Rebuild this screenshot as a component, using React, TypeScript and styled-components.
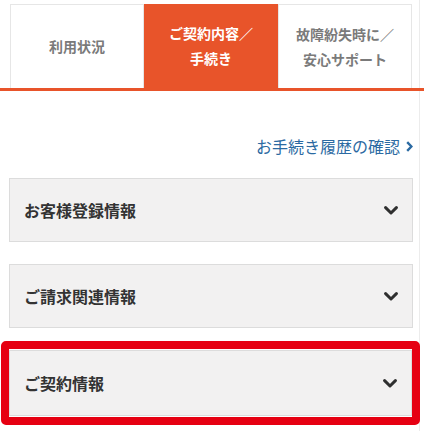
import React from 'react';
import styled, { createGlobalStyle } from 'styled-components';

const GlobalStyle = createGlobalStyle`
  html, body {
    margin: 0;
    padding: 0;
    background: #fff;
    font-family: "Noto Sans CJK JP", "Noto Sans", sans-serif;
    overflow: hidden;
  }
`;

const Page = styled.div`
  width: 419px;
  min-height: 431px;
  border-right: 1px solid #ececec;
`;

const TabBar = styled.nav`
  display: flex;
  padding: 4px 0 0 10px;
  margin-right: -5px;
  border-bottom: 3px solid #e8542a;
`;

const Tab = styled.div<{ $active?: boolean }>`
  width: 134px;
  height: 84px;
  box-sizing: border-box;
  display: flex;
  align-items: center;
  justify-content: center;
  text-align: center;
  font-size: 14px;
  line-height: 25px;
  font-weight: 700;
  color: ${p => (p.$active ? '#fff' : '#7a7a7a')};
  background: ${p => (p.$active ? '#e8542a' : '#fff')};
  border: ${p => (p.$active ? 'none' : '1px solid #e6e6e6')};
  border-bottom: none;
`;

const Content = styled.div`
  padding: 43px 6px 0 9px;
`;

const HistoryLink = styled.a`
  display: flex;
  justify-content: flex-end;
  align-items: center;
  gap: 6px;
  font-size: 16px;
  line-height: 24px;
  color: #2b6aa2;
  text-decoration: none;
  margin-bottom: 20px;
`;

const List = styled.div`
  display: flex;
  flex-direction: column;
  gap: 22px;
`;

const Item = styled.div<{ $tall?: boolean }>`
  height: ${p => (p.$tall ? 66 : 64)}px;
  box-sizing: border-box;
  background: #f2f1f1;
  border: 1px solid #dcdcdc;
  display: flex;
  align-items: center;
  justify-content: space-between;
  padding: 0 14px;
  font-size: 16px;
  font-weight: 700;
  color: #333;
`;

const Highlight = styled.div`
  margin: -9px -7px 0 -8px;
  border: 8px solid #e60012;
  border-radius: 5px;
  padding: 1px 0;
`;

const Chevron = () => (
  <svg width="14" height="9" viewBox="0 0 14 9">
    <path d="M1.6 1.6 L7 7 L12.4 1.6" fill="none" stroke="#2f2f2f" strokeWidth="3" strokeLinecap="round" strokeLinejoin="round" />
  </svg>
);

const LinkArrow = () => (
  <svg width="7" height="11" viewBox="0 0 7 11">
    <path d="M1.2 1.2 L5.4 5.5 L1.2 9.8" fill="none" stroke="#2b6aa2" strokeWidth="2.4" />
  </svg>
);

const items = ['お客様登録情報', 'ご請求関連情報'];

export default function App() {
  return (
    <Page>
      <GlobalStyle />
      <TabBar>
        <Tab>利用状況</Tab>
        <Tab $active>ご契約内容／<br />手続き</Tab>
        <Tab>故障紛失時に／<br />安心サポート</Tab>
      </TabBar>
      <Content>
        <HistoryLink href="#">
          お手続き履歴の確認
          <LinkArrow />
        </HistoryLink>
        <List>
          {items.map(label => (
            <Item key={label}>
              {label}
              <Chevron />
            </Item>
          ))}
          <Highlight>
            <Item $tall>
              ご契約情報
              <Chevron />
            </Item>
          </Highlight>
        </List>
      </Content>
    </Page>
  );
}
